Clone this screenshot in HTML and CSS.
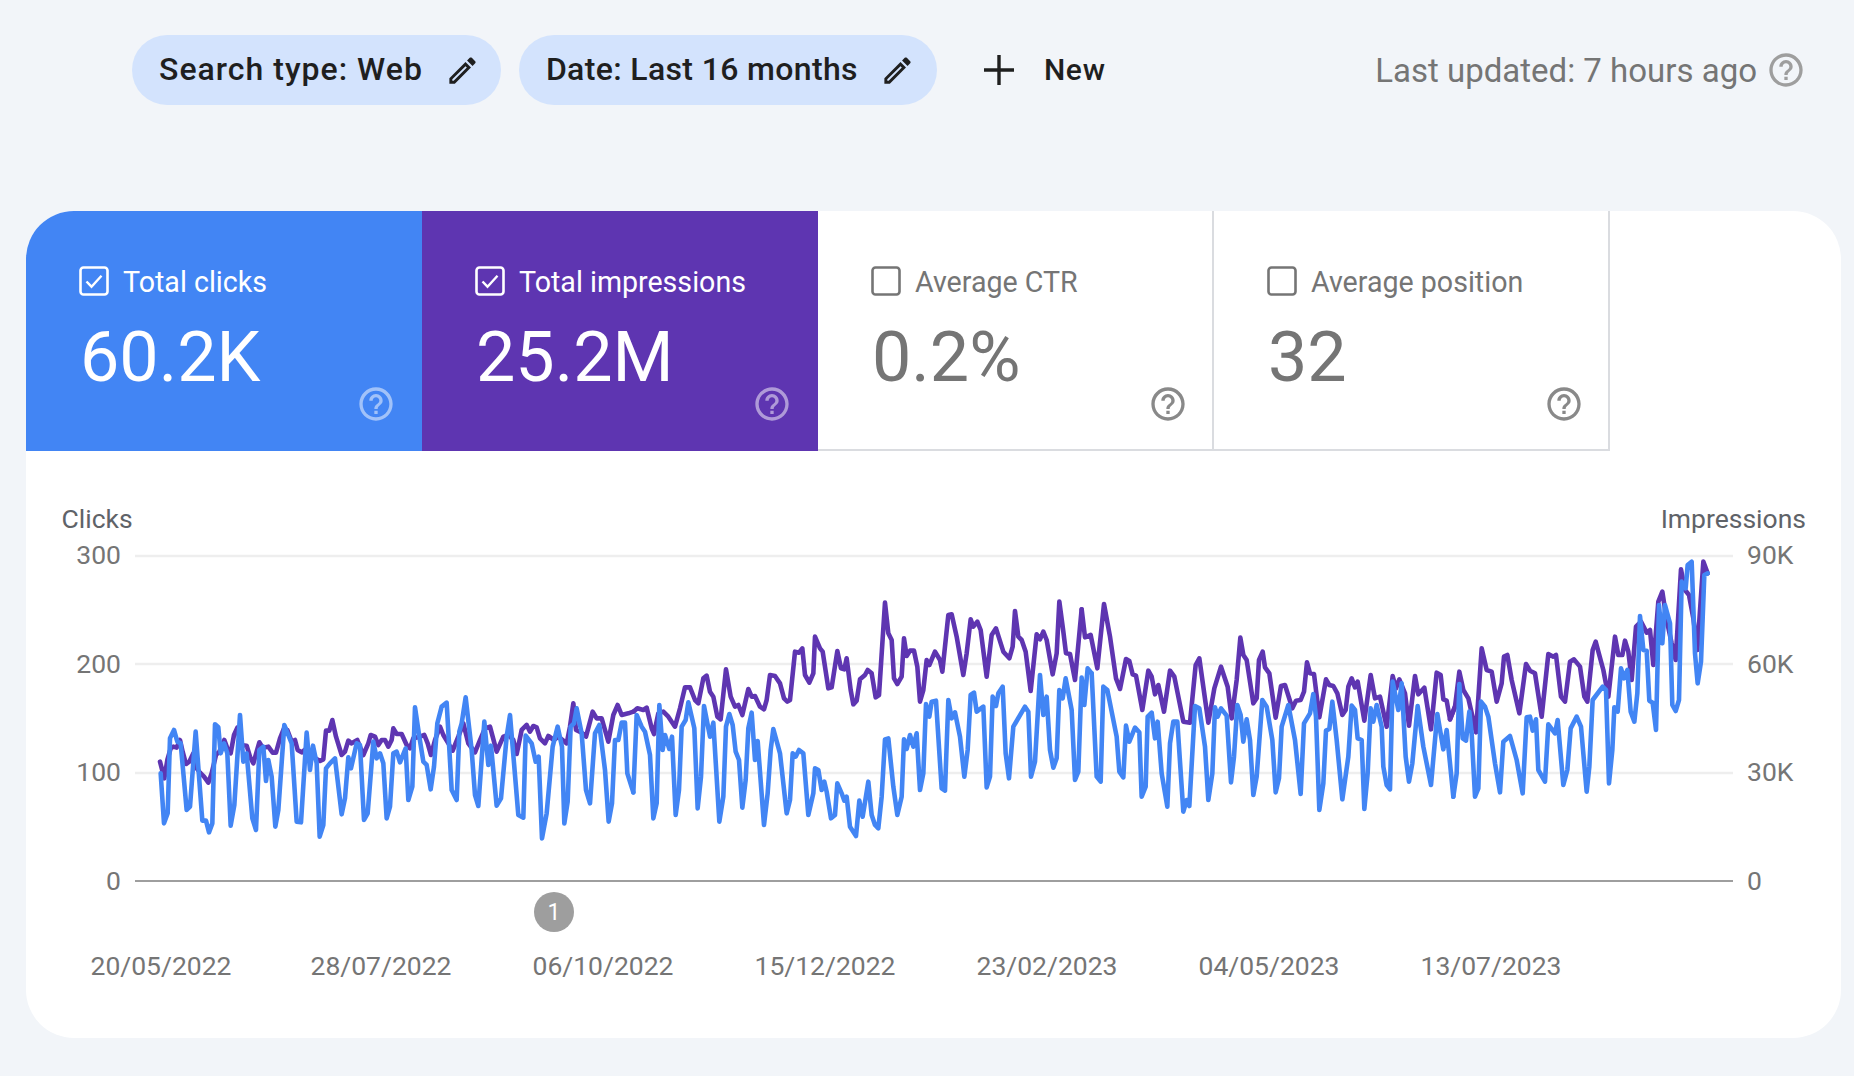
FILE: index.html
```html
<!DOCTYPE html>
<html lang="en">
<head>
<meta charset="utf-8">
<title>Performance</title>
<link rel="stylesheet" href="styles.css">
</head>
<body>
<svg class="defs" width="0" height="0" aria-hidden="true">
  <symbol id="help" viewBox="0 0 24 24"><path d="M11 18h2v-2h-2v2zm1-16C6.48 2 2 6.48 2 12s4.48 10 10 10 10-4.48 10-10S17.52 2 12 2zm0 18c-4.41 0-8-3.59-8-8s3.59-8 8-8 8 3.59 8 8-3.59 8-8 8zm0-14c-2.21 0-4 1.79-4 4h2c0-1.1.9-2 2-2s2 .9 2 2c0 2-3 1.75-3 5h2c0-2.25 3-2.5 3-5 0-2.21-1.79-4-4-4z"/></symbol>
  <symbol id="pencil" viewBox="0 0 24 24"><path d="M14.06 9.02l.92.92L5.92 19H5v-.92l9.06-9.06M17.66 3c-.25 0-.51.1-.7.29l-1.83 1.83 3.75 3.75 1.83-1.83c.39-.39.39-1.02 0-1.41l-2.34-2.34c-.2-.2-.45-.29-.71-.29zm-3.6 3.19L3 17.25V21h3.75L17.81 9.94l-3.75-3.75z"/></symbol>
  <symbol id="checked" viewBox="0 0 30 30"><rect x="1.5" y="1.5" width="27" height="27" rx="3" fill="none" stroke="currentColor" stroke-width="2.6"/><path d="M7.5 15.5l5 5.2 10-11" fill="none" stroke="currentColor" stroke-width="2.4"/></symbol>
  <symbol id="unchecked" viewBox="0 0 30 30"><rect x="1.5" y="1.5" width="27" height="27" rx="3" fill="none" stroke="currentColor" stroke-width="2.6"/></symbol>
</svg>
<header class="toolbar">
  <div class="chip chip-type"><span>Search type: Web</span><svg class="pencil"><use href="#pencil"/></svg></div>
  <div class="chip chip-date"><span>Date: Last 16 months</span><svg class="pencil"><use href="#pencil"/></svg></div>
  <div class="new"><svg class="plus" viewBox="0 0 34 34"><path d="M17 2v30M2 17h30"/></svg><span>New</span></div>
  <div class="updated"><span>Last updated: 7 hours ago</span><svg class="help help-top"><use href="#help"/></svg></div>
</header>
<main class="card">
  <section class="tiles">
    <div class="tile tile-blue"><div class="tile-label"><svg class="check"><use href="#checked"/></svg><span>Total clicks</span></div><div class="tile-value">60.2K</div><svg class="help tile-help"><use href="#help"/></svg></div>
    <div class="tile tile-purple"><div class="tile-label"><svg class="check"><use href="#checked"/></svg><span>Total impressions</span></div><div class="tile-value">25.2M</div><svg class="help tile-help"><use href="#help"/></svg></div>
    <div class="tile tile-off"><div class="tile-label"><svg class="check"><use href="#unchecked"/></svg><span>Average CTR</span></div><div class="tile-value">0.2%</div><svg class="help tile-help"><use href="#help"/></svg></div>
    <div class="tile tile-off"><div class="tile-label"><svg class="check"><use href="#unchecked"/></svg><span>Average position</span></div><div class="tile-value">32</div><svg class="help tile-help"><use href="#help"/></svg></div>
  </section>
  <svg class="chart" viewBox="26 451 1815 587" width="1815" height="587">
    <g class="grid">
      <path d="M135 556H1733M135 664H1733M135 773H1733"/>
    </g>
    <path class="zero" d="M135 881H1733"/>
    <text class="axis-title" x="61.5" y="528">Clicks</text>
    <text class="axis-title end" x="1806" y="528">Impressions</text>
    <g class="tick end">
      <text x="121" y="564">300</text><text x="121" y="673">200</text><text x="121" y="781">100</text><text x="121" y="890">0</text>
    </g>
    <g class="tick">
      <text x="1747" y="564">90K</text><text x="1747" y="673">60K</text><text x="1747" y="781">30K</text><text x="1747" y="890">0</text>
    </g>
    <g class="tick mid">
      <text x="161" y="975">20/05/2022</text><text x="381" y="975">28/07/2022</text><text x="603" y="975">06/10/2022</text><text x="825" y="975">15/12/2022</text><text x="1047" y="975">23/02/2023</text><text x="1269" y="975">04/05/2023</text><text x="1491" y="975">13/07/2023</text>
    </g>
    <circle class="badge" cx="554" cy="912" r="20"/>
    <text class="badge-text" x="554" y="920">1</text>

    <g class="line purple">
      <polyline transform="translate(130 580) scale(.33333)" points="90,545 103,595 112,540 122,505 130,500 140,503 150,480 158,515 168,552 178,545 190,520 200,565 210,578 222,590 235,608 245,580 258,525 268,515 283,480 292,505 302,520 312,465 322,443 332,495 350,497 360,530 370,550 380,515 388,487 398,503 415,500 428,518 438,518 450,475 462,445 472,450 485,485 495,480 503,510 515,517 530,505 548,530 570,543 580,538 588,452 598,452 607,420 618,470 635,525 645,515 655,482 665,490 682,480 700,525 715,490 722,465 735,470 745,495 755,480 765,480 775,500 785,480 790,445 800,462 815,462 830,495 840,505 850,475 870,470 883,465 893,490 903,525 915,480 930,440 940,465 955,490 968,512 985,470 1000,430 1015,490 1035,517 1050,480 1065,445 1080,440 1100,515 1120,470 1135,465 1150,480 1160,522 1175,450 1190,435 1200,455 1210,438 1220,442 1230,475 1245,490 1255,468 1272,480 1285,470 1310,490 1320,440 1330,370 1338,450 1355,458 1368,470 1388,395 1400,415 1415,415 1435,485 1450,405 1463,375 1475,405 1495,400 1510,395"/>
      <polyline transform="translate(600 580) scale(.33333)" points="100,395 112,385 130,390 140,383 155,445 162,462 175,400 190,395 205,410 225,440 240,385 255,322 270,322 285,360 295,370 310,295 320,287 330,335 340,350 352,410 362,418 378,268 392,350 405,380 415,375 427,405 445,327 455,350 465,348 480,380 492,388 500,360 510,285 525,288 540,310 552,355 562,365 570,360 585,215 597,218 607,205 615,285 628,308 640,280 645,170 660,205 668,215 685,325 695,322 712,213 723,265 733,268 740,235 752,330 760,373 770,362 780,298 795,285 803,270 815,280 827,352 837,345 855,68 865,160 875,180 882,295 892,312 905,290 912,175 920,228 930,212 942,212 952,260 960,365 970,330 980,240 988,255 1005,215 1020,240 1027,275 1045,105 1055,103 1070,170 1090,285 1100,220 1112,118 1120,140 1132,125 1142,150 1160,290 1175,165 1188,145 1210,215 1228,235 1238,200 1245,93 1255,170 1265,180 1277,215 1292,333 1310,163 1320,178 1330,155 1340,180 1358,283 1370,220 1378,65 1390,155 1398,220 1410,222 1425,300 1445,88"/>
      <polyline transform="translate(1080 580) scale(.33333)" points="5,88 15,172 32,165 52,265 72,72 90,170 108,295 120,327 138,237 148,243 158,283 168,287 187,390 205,272 215,290 225,343 235,315 252,395 270,272 283,290 310,425 330,428 347,255 358,235 385,428 403,325 423,260 443,320 455,415 470,300 481,173 490,225 500,240 520,370 530,355 537,240 548,215 555,262 568,280 587,413 603,318 615,315 637,385 648,362 662,360 672,335 681,247 690,280 702,282 718,412 738,298 748,315 760,318 772,340 787,405 797,390 805,320 815,295 825,322 833,305 853,422 872,285 885,355 900,350 920,440 938,288 948,325 958,298 975,340 987,437 1005,288 1015,343 1033,323 1053,448 1070,278 1082,285 1090,358 1100,362 1110,418 1125,380"/>
      <polyline transform="translate(1450 480) scale(.33333)" points="0,718 15,680 28,575 40,630 55,655 78,757 95,505 110,570 125,575 140,665 155,610 162,530 172,525 185,600 208,700 228,552 240,572 255,580 275,710 295,522 310,530 318,525 333,650 345,665 360,545 372,538 390,560 403,650 412,665 428,510 437,485 460,570 475,650 495,470 505,525 517,525 525,482 535,515 545,600 558,440 573,425 590,458 600,450 610,555 625,365 637,335 650,420 665,490 677,540 693,268 705,330 717,345 730,415 742,510 760,245 773,280"/>
    </g>
    <g class="line blue">
      <polyline transform="translate(130 580) scale(.33333)" points="92,580 102,730 113,700 120,475 132,450 142,485 152,490 170,690 180,680 197,455 217,722 228,722 237,757 247,730 255,433 265,442 272,520 282,490 292,520 302,737 313,675 330,405 340,545 350,520 367,715 378,750 388,510 400,500 408,603 415,540 425,590 436,740 445,690 463,435 485,490 500,725 513,727 530,458 540,570 549,497 560,550 569,770 580,735 588,565 600,550 615,535 635,703 645,655 655,532 663,565 680,490 690,495 702,720 713,700 730,485 740,535 750,520 760,550 770,715 780,680 790,520 800,515 810,547 827,505 835,660 847,620 855,382 868,470 880,545 890,555 902,628 912,560 922,430 935,380 950,368 965,630 980,660 988,455 995,430 1007,352 1025,510 1035,645 1045,678 1063,425 1075,555 1083,497 1100,677 1113,655 1130,470 1140,405 1165,705 1180,713 1187,467 1205,490 1217,545 1226,530 1236,775 1250,700 1268,500 1283,440 1296,500 1303,730 1313,665 1322,440 1332,430 1340,385 1355,460 1368,630 1380,670 1395,460 1408,435 1425,570 1436,725 1446,670 1455,480 1465,480 1475,428 1485,428 1492,580 1510,637"/>
      <polyline transform="translate(600 580) scale(.33333)" points="100,637 110,405 125,440 135,455 150,525 160,715 170,670 178,375 188,510 195,465 208,507 216,470 227,705 237,630 245,440 257,420 265,367 283,445 293,685 303,590 312,378 330,470 340,428 358,725 370,650 378,440 388,402 398,435 407,515 417,540 427,683 437,600 445,445 455,398 465,540 473,483 492,735 503,640 512,510 520,447 540,520 560,700 570,660 578,520 587,530 597,510 610,520 625,705 640,640 645,565 655,570 665,630 673,605 680,635 693,715 705,705 712,610 725,640 733,662 740,650 750,740 768,768 778,662 788,710 805,605 815,705 825,735 835,745 845,650 855,478 865,475 880,620 892,705 905,650 912,478 920,507 930,465 940,500 950,460 960,630 970,580 978,372 988,410 995,365 1008,362 1025,625 1035,632 1045,360 1055,415 1065,397 1080,470 1093,590 1103,510 1112,345 1122,338 1130,395 1150,380 1160,622 1170,590 1178,350 1188,378 1195,340 1208,320 1217,520 1227,595 1240,440 1275,380 1285,395 1293,590 1305,545 1320,285 1330,405 1340,350 1350,510 1360,563 1370,535 1378,330 1388,355 1397,295 1415,390 1425,600 1435,575 1445,293 1453,375 1463,265 1475,280"/>
      <polyline transform="translate(1080 580) scale(.33333)" points="35,280 50,590 62,605 70,320 82,330 110,470 118,575 130,592 138,437 148,485 165,443 178,457 185,650 197,620 203,410 215,398 225,475 233,425 245,580 262,680 270,490 280,425 292,425 310,695 320,660 328,678 345,378 358,385 375,500 385,660 397,580 405,382 413,410 423,385 440,407 453,607 462,530 472,375 482,405 490,485 500,418 510,480 520,645 530,590 547,360 560,380 577,480 587,637 597,595 605,440 625,375 645,480 662,642 672,430 690,400 700,342 708,410 718,690 730,610 738,452 748,447 757,365 770,480 787,658 805,530 815,377 825,390 833,475 845,480 853,687 863,580 872,385 880,425 890,375 905,440 910,560 920,615 930,628 938,305 955,390 965,310 977,530 987,605 997,550 1013,378 1030,500 1053,615 1072,402 1090,508 1100,450 1120,650"/>
      <polyline transform="translate(1450 480) scale(.33333)" points="10,950 20,880 28,612 38,775 48,782 58,695 65,760 75,950 85,925 93,665 105,680 115,710 135,850 150,937 160,785 180,768 200,840 218,940 230,712 240,710 248,752 258,718 265,870 285,905 295,733 315,760 323,720 340,915 352,870 362,745 380,710 393,740 410,935 418,860 428,660 458,620 468,630 477,910 487,810 493,682 503,695 513,565 522,595 532,570 542,695 553,725 562,640 570,408 580,510 590,512 598,662 608,668 618,750 627,375 637,490 645,375 660,430 667,675 677,693 687,660 695,305 707,325 713,255 725,245 735,520 743,610 753,545 763,285 773,280"/>
    </g>
  </svg>
</main>
</body>
</html>
```
FILE: styles.css
```css
* { box-sizing: border-box; }
html, body { margin: 0; padding: 0; }
body {
  width: 1854px;
  height: 1076px;
  overflow: hidden;
  background: #f2f5f9;
  font-family: Roboto, "Liberation Sans", sans-serif;
}
.defs { position: absolute; }

.toolbar {
  display: flex;
  align-items: center;
  height: 70px;
  margin-top: 35px;
  padding-left: 132px;
  padding-right: 48px;
}
.chip {
  display: flex;
  align-items: center;
  height: 70px;
  padding: 0 21px 0 27px;
  border-radius: 35px;
  background: #d3e3fd;
  color: #1f1f1f;
  font-size: 32px;
  font-weight: 500;
  letter-spacing: 1px;
}
.chip-type { margin-right: 18px; }
.chip-date { padding-right: 22px; letter-spacing: .35px; }
.chip span, .new span { position: relative; top: -1px; }
.pencil { width: 35px; height: 35px; margin-left: 22px; fill: #1f1f1f; }
.new {
  display: flex;
  align-items: center;
  margin-left: 45px;
  color: #1f1f1f;
  font-size: 30px;
  font-weight: 500;
  letter-spacing: .7px;
}
.plus { width: 34px; height: 34px; margin-right: 28px; fill: none; stroke: #1f1f1f; stroke-width: 3.4; }
.updated {
  display: flex;
  align-items: center;
  margin-left: auto;
  color: #757575;
  font-size: 33px;
}
.help { width: 40px; height: 40px; }
.help-top { margin-left: 9px; fill: #9e9e9e; }

.card {
  width: 1815px;
  height: 827px;
  margin: 106px 0 0 26px;
  border-radius: 48px;
  overflow: hidden;
  background: #fff;
}
.tiles { display: flex; height: 240px; }
.tile {
  position: relative;
  width: 396px;
  padding: 55px 0 0 53px;
}
.tile-blue { background: #4285f4; color: #fff; }
.tile-purple { background: #5e35b1; color: #fff; }
.tile-off {
  color: #757575;
  border-right: 2px solid #dadce0;
  border-bottom: 2px solid #dadce0;
}
.tile-label { display: flex; align-items: center; height: 32px; font-size: 28.6px; }
.check { width: 30px; height: 30px; margin-right: 14px; margin-top: -2px; }
.tile-value { margin-top: 17px; padding-left: 1px; font-size: 70px; line-height: 84px; }
.tile-help { position: absolute; right: 26px; bottom: 27px; fill: currentColor; opacity: .5; }
.tile-off .tile-help { opacity: .85; right: 24px; bottom: 25px; }

.chart { display: block; }
.grid path { fill: none; stroke: #eeeeee; stroke-width: 2.4; }
.zero { fill: none; stroke: #9e9e9e; stroke-width: 2; }
.axis-title { font-size: 26.5px; fill: #5f6368; }
.tick { font-size: 26.5px; fill: #757575; }
.end { text-anchor: end; }
.mid { text-anchor: middle; }
.badge { fill: #9e9e9e; }
.badge-text { font-size: 23px; fill: #fff; text-anchor: middle; }
.line polyline {
  fill: none;
  stroke-width: 4.6;
  stroke-linejoin: round;
  stroke-linecap: round;
  vector-effect: non-scaling-stroke;
}
.purple polyline { stroke: #5e35b1; }
.blue polyline { stroke: #4285f4; }
```
